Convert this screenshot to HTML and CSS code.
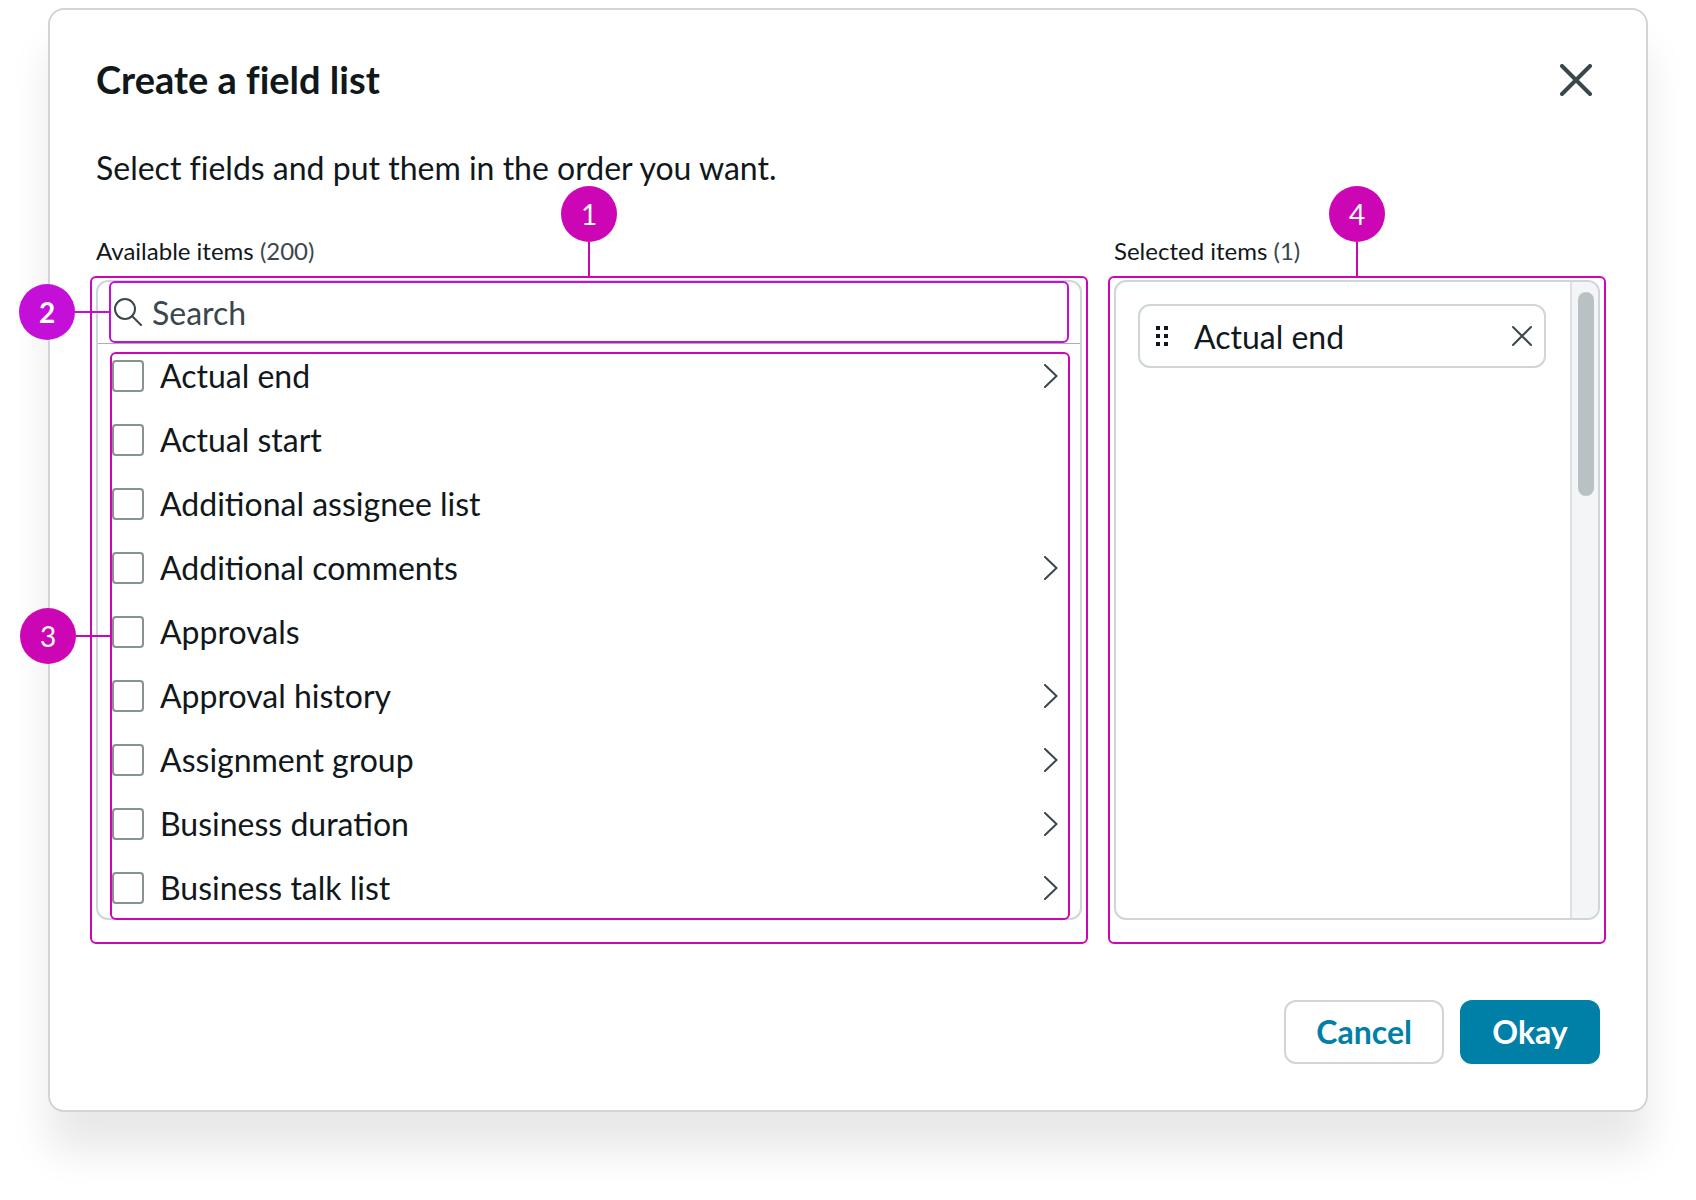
FILE: index.html
```html
<!DOCTYPE html>
<html lang="en">
<head>
<meta charset="utf-8">
<meta name="viewport" content="width=device-width, initial-scale=1">
<title>Create a field list</title>
<link rel="stylesheet" href="styles.css">
</head>
<body>
<svg class="sprite" aria-hidden="true">
  <symbol id="chevron" viewBox="0 0 14 24"><path d="M1 1l11.500 11L1 23"/></symbol>
  <symbol id="cross" viewBox="0 0 20 20"><path d="M1 1l18 18M19 1L1 19"/></symbol>
</svg>
<main class="dialog" role="dialog" aria-labelledby="dialog-title">
  <header class="dialog-header">
    <h1 class="dialog-title" id="dialog-title">Create a field list</h1>
    <button class="close" type="button" aria-label="Close">
      <svg class="close-icon" viewBox="0 0 32 32"><path d="M2 2l28 28M30 2L2 30"/></svg>
    </button>
  </header>
  <p class="intro">Select fields and put them in the order you want.</p>

  <div class="columns">
    <section class="column">
      <h2 class="label">Available items <span class="count">(200)</span></h2>
      <div class="panel">
        <div class="search">
          <svg class="search-icon" viewBox="0 0 28 28"><circle cx="11" cy="11" r="10"/><path d="M18 18l9 9"/></svg>
          <input class="search-input" type="text" placeholder="Search" aria-label="Search available items">
          <div class="mark mark-search"><span class="callout callout-left callout-violet"><span class="badge badge-bold">2</span></span></div>
        </div>
        <div class="list-area">
          <ul class="list">
            <li class="row"><label class="option"><input class="tick" type="checkbox">Actual end</label><button class="expand" type="button" aria-label="Expand Actual end"><svg class="chevron"><use href="#chevron"/></svg></button></li>
            <li class="row"><label class="option"><input class="tick" type="checkbox">Actual start</label></li>
            <li class="row"><label class="option"><input class="tick" type="checkbox">Additional assignee list</label></li>
            <li class="row"><label class="option"><input class="tick" type="checkbox">Additional comments</label><button class="expand" type="button" aria-label="Expand Additional comments"><svg class="chevron"><use href="#chevron"/></svg></button></li>
            <li class="row"><label class="option"><input class="tick" type="checkbox">Approvals</label></li>
            <li class="row"><label class="option"><input class="tick" type="checkbox">Approval history</label><button class="expand" type="button" aria-label="Expand Approval history"><svg class="chevron"><use href="#chevron"/></svg></button></li>
            <li class="row"><label class="option"><input class="tick" type="checkbox">Assignment group</label><button class="expand" type="button" aria-label="Expand Assignment group"><svg class="chevron"><use href="#chevron"/></svg></button></li>
            <li class="row"><label class="option"><input class="tick" type="checkbox">Business duration</label><button class="expand" type="button" aria-label="Expand Business duration"><svg class="chevron"><use href="#chevron"/></svg></button></li>
            <li class="row"><label class="option"><input class="tick" type="checkbox">Business talk list</label><button class="expand" type="button" aria-label="Expand Business talk list"><svg class="chevron"><use href="#chevron"/></svg></button></li>
          </ul>
          <div class="mark mark-list"><span class="callout callout-left"><span class="badge">3</span></span></div>
        </div>
        <div class="mark mark-panel"><span class="callout callout-top"><span class="badge">1</span></span></div>
      </div>
    </section>

    <section class="column">
      <h2 class="label">Selected items <span class="count">(1)</span></h2>
      <div class="panel panel-selected">
        <ul class="selected">
          <li class="chip">
            <svg class="grip" viewBox="0 0 12 20"><path d="M0 0h4v4H0zM8 0h4v4H8zM0 8h4v4H0zM8 8h4v4H8zM0 16h4v4H0zM8 16h4v4H8z"/></svg>
            <span class="chip-text">Actual end</span>
            <button class="remove" type="button" aria-label="Remove Actual end"><svg class="cross"><use href="#cross"/></svg></button>
          </li>
        </ul>
        <div class="scrollbar"><div class="thumb"></div></div>
        <div class="mark mark-panel"><span class="callout callout-top"><span class="badge">4</span></span></div>
      </div>
    </section>
  </div>

  <footer class="actions">
    <button class="button" type="button">Cancel</button>
    <button class="button button-primary" type="button">Okay</button>
  </footer>
</main>
</body>
</html>
```
FILE: styles.css
```css
* { box-sizing: border-box; }

body {
  margin: 0;
  padding: 8px 48px 88px;
  background: #fff;
  color: #10181b;
  font: 32px/48px Lato, "Liberation Sans", sans-serif;
}

ul { margin: 0; padding: 0; list-style: none; }
button, input { margin: 0; padding: 0; font: inherit; color: inherit; }
button { border: 0; background: none; cursor: pointer; }
svg { display: block; fill: none; stroke: #3a474c; stroke-width: 2; stroke-linecap: round; }
.sprite { display: none; }

.dialog {
  padding: 46px;
  border: 2px solid #cfd5d8;
  border-radius: 16px;
  background: #fff;
  box-shadow: 0 40px 40px rgba(0, 0, 0, 0.09);
}

.dialog-header { display: flex; align-items: flex-start; justify-content: space-between; }
.dialog-title { margin: 0; font-size: 38px; line-height: 46px; font-weight: 700; font-variant-ligatures: none; }
.close { display: grid; place-items: center; width: 48px; height: 48px; }
.close-icon { width: 32px; height: 32px; stroke-width: 4; }

.intro { margin: 40px 0 43px; font-variant-ligatures: none; }

.columns { display: grid; grid-template-columns: minmax(0, 1fr) 486px; gap: 32px; }
.column { display: flex; flex-direction: column; gap: 13px; }
.label { margin: 0; font-size: 24px; line-height: 32px; font-weight: 400; }
.count { color: #3a474c; }

/* The frame is an inset shadow so that the rows fill the whole panel. */
.panel {
  position: relative;
  flex: 1;
  border-radius: 12px;
  box-shadow: inset 0 0 0 2px #cfd5d8;
}

.search {
  position: relative;
  display: flex;
  align-items: center;
  gap: 10px;
  height: 64px;
  margin: 0 2px;
  padding: 0 16px;
  border-bottom: 1px solid #a9b0b3;
}
.search-icon { width: 28px; height: 28px; }
.search-input { flex: 1; min-width: 0; height: 48px; padding-top: 2px; border: 0; outline: 0; background: none; }
.search-input::placeholder { color: #3a474c; opacity: 1; }

.list-area { position: relative; }
.row { display: flex; align-items: center; justify-content: space-between; height: 64px; padding: 0 16px; }
.option { display: flex; align-items: center; gap: 16px; }
.tick {
  appearance: none;
  width: 32px;
  height: 32px;
  border: 2px solid #879295;
  border-radius: 4px;
  background: #fff;
}
.expand { display: grid; place-items: center; width: 30px; height: 48px; }
.chevron { width: 14px; height: 24px; }

.panel-selected { display: flex; padding: 2px; }
.selected { flex: 1; padding: 22px 24px 22px 22px; }
.chip {
  display: flex;
  align-items: center;
  height: 64px;
  padding: 0 12px 0 16px;
  border: 2px solid #cfd5d8;
  border-radius: 12px;
}
.grip { width: 12px; height: 20px; fill: #10181b; stroke: none; }
.chip-text { flex: 1; padding: 2px 0 0 26px; }
.remove { display: grid; place-items: center; width: 20px; height: 48px; }
.cross { width: 20px; height: 20px; }

.scrollbar {
  width: 28px;
  padding: 10px 4px 10px 6px;
  border-left: 2px solid #dde1e4;
  border-radius: 0 10px 10px 0;
  background: #f4f5f7;
}
.thumb { height: 204px; border-radius: 8px; background: #bac1c5; }

.actions { display: flex; justify-content: flex-end; gap: 16px; margin-top: 80px; }
.button {
  min-width: 140px;
  height: 64px;
  padding: 0 30px;
  border: 2px solid #cfd5d8;
  border-radius: 12px;
  background: #fff;
  color: #0080a6;
  font-weight: 700;
}
.button-primary { border-color: #0080a6; background: #0080a6; color: #fff; }

/* Numbered annotations laid over the dialog */
.mark { position: absolute; border: 2px solid #cc06b4; border-radius: 6px; pointer-events: none; }
.mark-panel { inset: -4px -6px -24px; }
.mark-search { inset: 1px 11px 0; border-color: #c40fd8; }
.mark-list { inset: 8px 12px 0 14px; }

.callout { position: absolute; display: flex; align-items: center; color: #cc06b4; }
.callout::after { content: ""; background: currentColor; }
.callout-top { bottom: 100%; left: 50%; flex-direction: column; transform: translateX(-50%); }
.callout-top::after { width: 2px; height: 36px; }
.callout-left { right: 100%; top: 50%; transform: translateY(-50%); }
.callout-left::after { width: 36px; height: 2px; }
.callout-violet { color: #c40fd8; }
.badge {
  width: 56px;
  height: 56px;
  border-radius: 50%;
  background: #cc06b4;
  font-size: 28px;
  line-height: 56px;
  text-align: center;
  color: #fff;
}
.badge-bold { background: #c40fd8; font-weight: 700; }
```
